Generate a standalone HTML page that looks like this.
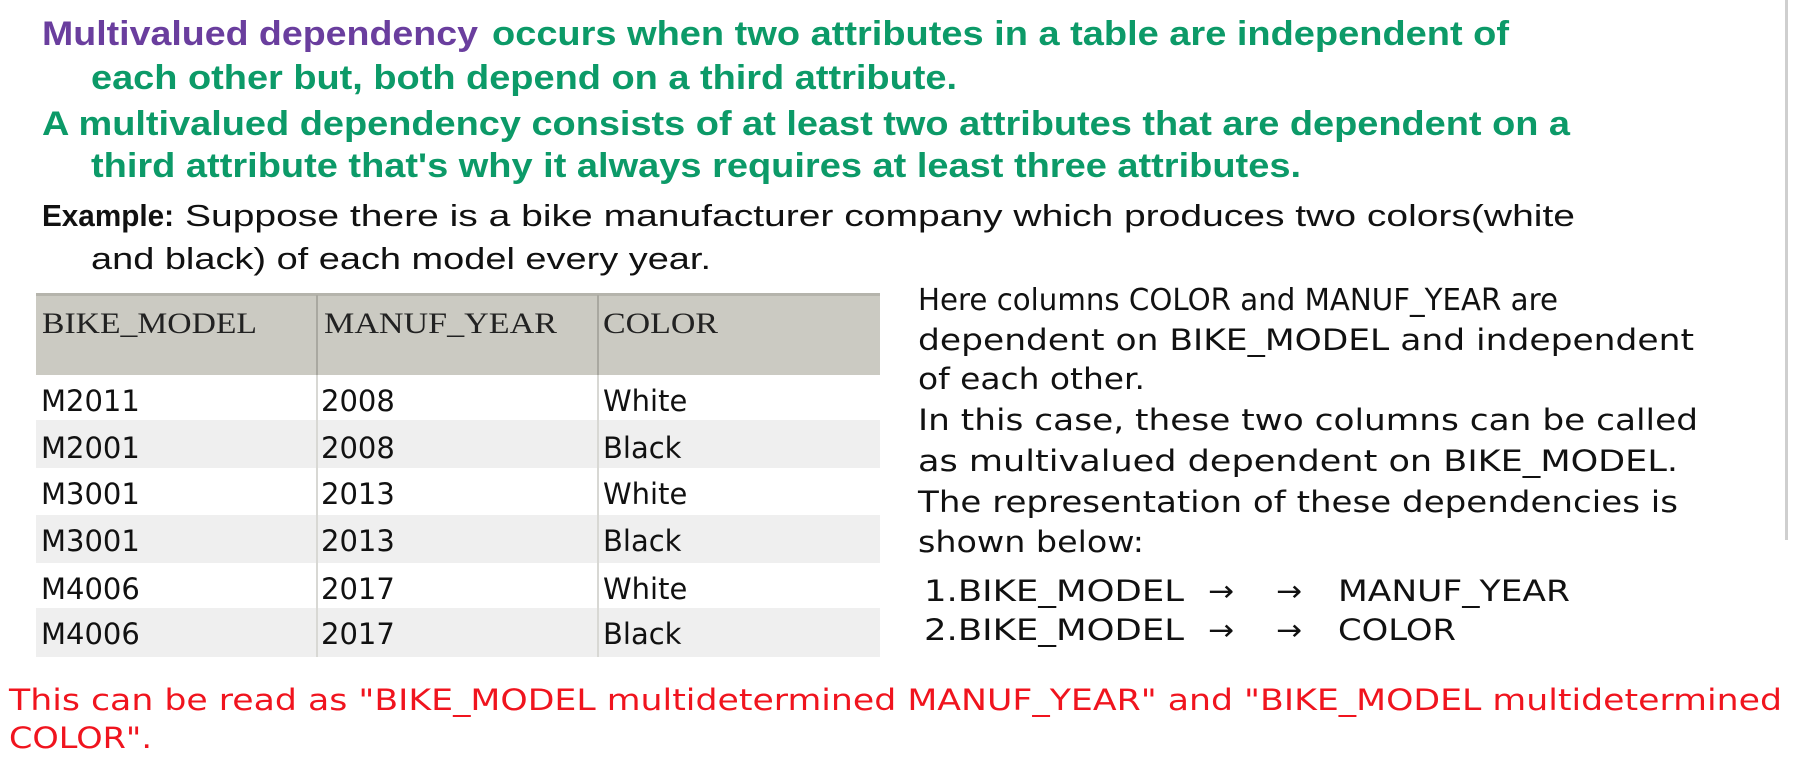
<!DOCTYPE html>
<html><head><meta charset="utf-8"><style>
html,body{margin:0;padding:0;background:#fff;width:1793px;height:760px;overflow:hidden}
svg{display:block}
.g{font-family:"Liberation Sans",sans-serif;font-weight:bold;font-size:34px;fill:#0c9a68}
.p{fill:#6a3e9e}
.b{font-family:"Liberation Sans",sans-serif;font-size:31px;fill:#111}
.v{font-family:"DejaVu Sans",sans-serif;font-size:29px;fill:#111}
.t{font-family:"DejaVu Sans",sans-serif;font-size:29px;fill:#111}
.h{font-family:"Liberation Serif",serif;font-size:30px;fill:#222}
.r{font-family:"DejaVu Sans",sans-serif;font-size:29px;fill:#f0141e}
</style></head><body>
<svg width="1793" height="760" viewBox="0 0 1793 760" xmlns="http://www.w3.org/2000/svg">
<rect x="1785" y="0" width="3" height="540" fill="#cfcfcf"/>
<text class="g p" x="42" y="45" textLength="436" lengthAdjust="spacingAndGlyphs">Multivalued dependency</text>
<text class="g" x="492" y="45" textLength="1017" lengthAdjust="spacingAndGlyphs">occurs when two attributes in a table are independent of</text>
<text class="g" x="91" y="89" textLength="866" lengthAdjust="spacingAndGlyphs">each other but, both depend on a third attribute.</text>
<text class="g" x="42" y="135" textLength="1528" lengthAdjust="spacingAndGlyphs">A multivalued dependency consists of at least two attributes that are dependent on a</text>
<text class="g" x="91" y="177" textLength="1210" lengthAdjust="spacingAndGlyphs">third attribute that's why it always requires at least three attributes.</text>
<text class="b" x="42" y="226" font-weight="bold" textLength="132" lengthAdjust="spacingAndGlyphs">Example:</text>
<text class="b" x="185" y="226" textLength="1390" lengthAdjust="spacingAndGlyphs">Suppose there is a bike manufacturer company which produces two colors(white</text>
<text class="b" x="91" y="269" textLength="620" lengthAdjust="spacingAndGlyphs">and black) of each model every year.</text>

<rect x="36" y="295" width="844" height="80" fill="#cbcac2"/>
<rect x="36" y="293" width="844" height="3" fill="#b5b4ac"/>
<rect x="36" y="420" width="844" height="48" fill="#efefef"/>
<rect x="36" y="515" width="844" height="48" fill="#efefef"/>
<rect x="36" y="608" width="844" height="49" fill="#efefef"/>
<rect x="316" y="295" width="2" height="362" fill="#d8d8d4"/>
<rect x="597" y="295" width="2" height="362" fill="#d8d8d4"/>
<rect x="316" y="295" width="2" height="80" fill="#a9a8a0"/>
<rect x="597" y="295" width="2" height="80" fill="#a9a8a0"/>
<text class="h" x="42" y="333" textLength="215" lengthAdjust="spacingAndGlyphs">BIKE_MODEL</text>
<text class="h" x="324" y="333" textLength="233" lengthAdjust="spacingAndGlyphs">MANUF_YEAR</text>
<text class="h" x="603" y="333" textLength="115" lengthAdjust="spacingAndGlyphs">COLOR</text>
<g class="t">
<text x="41" y="411">M2011</text><text x="321" y="411">2008</text><text x="603" y="411">White</text>
<text x="41" y="458">M2001</text><text x="321" y="458">2008</text><text x="603" y="458">Black</text>
<text x="41" y="504">M3001</text><text x="321" y="504">2013</text><text x="603" y="504">White</text>
<text x="41" y="551">M3001</text><text x="321" y="551">2013</text><text x="603" y="551">Black</text>
<text x="41" y="599">M4006</text><text x="321" y="599">2017</text><text x="603" y="599">White</text>
<text x="41" y="644">M4006</text><text x="321" y="644">2017</text><text x="603" y="644">Black</text>
</g>

<text x="918" y="310" font-family="DejaVu Sans, sans-serif" font-size="30" fill="#111" textLength="640" lengthAdjust="spacingAndGlyphs">Here columns COLOR and MANUF_YEAR are</text>
<text class="v" x="918" y="350" textLength="776" lengthAdjust="spacingAndGlyphs">dependent on BIKE_MODEL and independent</text>
<text class="v" x="918" y="389" textLength="227" lengthAdjust="spacingAndGlyphs">of each other.</text>
<text class="v" x="918" y="430" textLength="780" lengthAdjust="spacingAndGlyphs">In this case, these two columns can be called</text>
<text class="v" x="918" y="471" textLength="760" lengthAdjust="spacingAndGlyphs">as multivalued dependent on BIKE_MODEL.</text>
<text class="v" x="918" y="512" textLength="760" lengthAdjust="spacingAndGlyphs">The representation of these dependencies is</text>
<text class="v" x="918" y="552" textLength="226" lengthAdjust="spacingAndGlyphs">shown below:</text>
<text class="v" x="924" y="601" textLength="260" lengthAdjust="spacingAndGlyphs">1.BIKE_MODEL</text>
<text class="v" x="1208" y="601" textLength="26" lengthAdjust="spacingAndGlyphs">→</text><text class="v" x="1276" y="601" textLength="26" lengthAdjust="spacingAndGlyphs">→</text>
<text class="v" x="1338" y="601" textLength="232" lengthAdjust="spacingAndGlyphs">MANUF_YEAR</text>
<text class="v" x="924" y="640" textLength="260" lengthAdjust="spacingAndGlyphs">2.BIKE_MODEL</text>
<text class="v" x="1208" y="640" textLength="26" lengthAdjust="spacingAndGlyphs">→</text><text class="v" x="1276" y="640" textLength="26" lengthAdjust="spacingAndGlyphs">→</text>
<text class="v" x="1338" y="640" textLength="118" lengthAdjust="spacingAndGlyphs">COLOR</text>

<text class="r" x="9" y="710" textLength="1773" lengthAdjust="spacingAndGlyphs">This can be read as "BIKE_MODEL multidetermined MANUF_YEAR" and "BIKE_MODEL multidetermined</text>
<text class="r" x="9" y="748" textLength="143" lengthAdjust="spacingAndGlyphs">COLOR".</text>
</svg>
</body></html>
